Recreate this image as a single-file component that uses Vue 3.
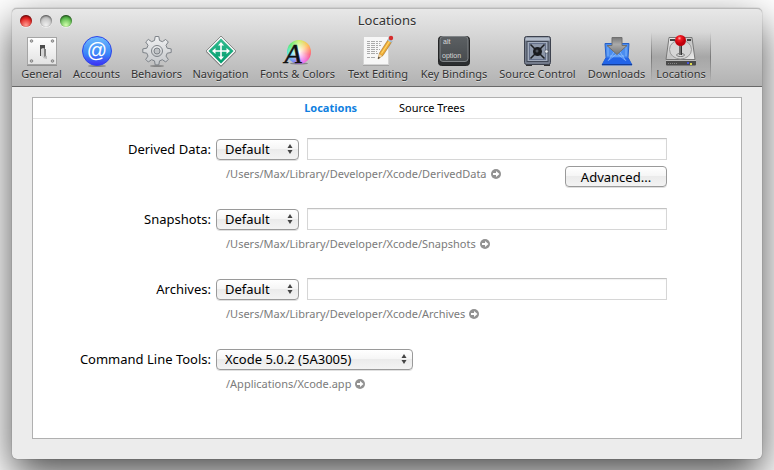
<template>
  <div class="desktop">
    <main class="window">
      <header class="header">
        <div class="title-bar">
          <div class="lights">
            <button class="light close" aria-label="Close"></button>
            <button class="light minimize" aria-label="Minimize" disabled></button>
            <button class="light zoom" aria-label="Zoom"></button>
          </div>
          <h1 class="title">{{ activePane }}</h1>
        </div>
        <nav class="toolbar">
          <button
            v-for="pane in panes"
            :key="pane"
            class="tool"
            :class="{ active: pane === activePane }"
            @click="activePane = pane"
          >
            <svg v-if="pane === 'General'" class="tool-icon" viewBox="0 0 32 32">
              <rect x="1" y="3" width="30" height="28" fill="#777" opacity="0.6" />
              <rect x="1.5" y="2.5" width="29" height="27" fill="url(#plate)" stroke="#a5a5a5" />
              <g fill="#bbb" stroke="#777" stroke-width="0.8">
                <circle cx="5.5" cy="6" r="1.3" />
                <circle cx="26.5" cy="6" r="1.3" />
                <circle cx="5.5" cy="26" r="1.3" />
                <circle cx="26.5" cy="26" r="1.3" />
              </g>
              <path d="M17 20l4 1v3l-4-1z" fill="#000" opacity="0.2" />
              <rect x="14" y="10" width="5" height="11" fill="#4b4b4b" />
              <path d="M15 14l2-1 2 1v7l-1 2-3-2z" fill="#d4d4d4" />
              <path d="M18 14v8l2-1v-7z" fill="#808080" />
            </svg>

            <svg v-else-if="pane === 'Accounts'" class="tool-icon" viewBox="0 0 32 32">
              <ellipse cx="16" cy="31" rx="9" ry="1" opacity="0.3" />
              <circle cx="16" cy="16" r="14.5" fill="url(#at)" stroke="#2f45e8" />
              <text x="16" y="22" class="at-sign">@</text>
            </svg>

            <svg v-else-if="pane === 'Behaviors'" class="tool-icon" viewBox="0 0 32 32">
              <ellipse cx="16" cy="31" rx="7" ry="1" opacity="0.3" />
              <g fill="url(#steel)" stroke="#7d8288" stroke-linejoin="round">
                <path
                  d="M13.5 5.5L14.200 1.500h3.600l.7 4 2.900 1.200 3.300-2.300 2.600 2.600-2.300 3.300 1.200 2.900 4 .7v3.600l-4 .7-1.200 2.900 2.300 3.300-2.600 2.600-3.300-2.300-2.900 1.200-.7 4h-3.600l-.7-4-2.900-1.200-3.300 2.300-2.600-2.600 2.300-3.300-1.200-2.900-4-.7v-3.600l4-.7 1.200-2.900-2.300-3.300 2.600-2.600 3.300 2.300z"
                />
                <circle cx="16" cy="16" r="5.5" />
                <circle cx="16" cy="16" r="3" fill="#bfc2c5" />
              </g>
            </svg>

            <svg v-else-if="pane === 'Navigation'" class="tool-icon" viewBox="0 0 32 32">
              <path d="M16 2L31 17 16 32 1 17z" fill="#555" opacity="0.5" />
              <path
                d="M16 1L31 16 16 31 1 16z"
                fill="#f4f4f4"
                stroke="#8b8b8b"
                stroke-linejoin="round"
              />
              <path d="M16 3.500L28.500 16 16 28.500 3.500 16z" fill="url(#green)" />
              <path d="M16 9v14M9 16h14" stroke="#fff" stroke-width="1.600" />
              <path
                d="M16 7l3 3.500h-6zM16 25l3-3.500h-6zM7 16l3.500-3v6zM25 16l-3.500-3v6z"
                fill="#fff"
              />
            </svg>

            <svg v-else-if="pane === 'Fonts & Colors'" class="tool-icon" viewBox="0 0 32 32">
              <ellipse cx="17" cy="28.500" rx="9" ry="1" opacity="0.300" />
              <foreignObject x="5" y="5" width="24" height="24">
                <div class="color-wheel"></div>
              </foreignObject>
              <text x="11" y="28" class="letter-a">A</text>
            </svg>

            <svg v-else-if="pane === 'Text Editing'" class="tool-icon" viewBox="0 0 32 32">
              <rect x="1" y="2" width="26" height="29" fill="#888" opacity="0.500" />
              <rect x="1.500" y="1.500" width="25" height="28" fill="#f7f7f7" stroke="#d4d4d4" />
              <path
                d="M5 6.500h15M5 8.500h13M5 10.500h14M5 12.500h12M5 14.500h13M5 16.500h10M5 18.500h11M5 22.500h8"
                stroke="#aaa"
                stroke-dasharray="3 1 4 1 2 1"
              />
              <path d="M16 24l1.500-6L26.500 4l3.500 2.500-9 14z" fill="#edaa35" stroke="#8d6224" stroke-width="0.500" />
              <path d="M19.500 18.500L28 5.500" stroke="#ffd76c" stroke-width="1.200" />
              <path d="M16 24l1.300-5 3 2z" fill="#efd1a0" />
              <path d="M16 24l.5-2.200 1.500 1z" fill="#222" />
              <path d="M26 4.500l4 2.500" stroke="#9fc0dc" stroke-width="2" />
              <circle cx="29" cy="3" r="2.200" fill="#d52c2c" />
            </svg>

            <svg v-else-if="pane === 'Key Bindings'" class="tool-icon" viewBox="0 0 32 32">
              <rect x="0.500" y="1.500" width="31" height="29" rx="3" fill="#2c2e30" stroke="#242526" />
              <rect x="2" y="1.500" width="28" height="25" rx="3" fill="url(#key)" stroke="#808487" />
              <text x="5" y="9" class="key-text">alt</text>
              <text x="4" y="23" class="key-text">option</text>
            </svg>

            <svg v-else-if="pane === 'Source Control'" class="tool-icon" viewBox="0 0 32 32">
              <rect x="4" y="29" width="6" height="2" fill="#333" />
              <rect x="22" y="29" width="6" height="2" fill="#333" />
              <rect x="2.500" y="1.500" width="26" height="28" rx="2" fill="#747c8c" stroke="#3d424e" />
              <path d="M4 2.500h23l1 3H3z" fill="#b4bdcb" />
              <rect x="5" y="6.500" width="21" height="20" fill="#a1abbc" stroke="#414856" />
              <rect x="7.500" y="8.500" width="16" height="16" fill="#8d97a9" stroke="#65708a" />
              <path d="M8.500 9.500l14 14M22.500 9.500l-14 14" stroke="#1c1e22" stroke-width="1.500" />
              <circle cx="15.500" cy="16.500" r="4.500" fill="#191b1f" />
              <circle cx="15" cy="16" r="1.500" fill="#4e535c" />
              <circle cx="24.500" cy="16.500" r="1.700" fill="#eceff3" stroke="#474d58" stroke-width="0.600" />
            </svg>

            <svg v-else-if="pane === 'Downloads'" class="tool-icon" viewBox="0 0 32 32">
              <path d="M4 8.500h24l-1 14 4 7.500H1l4-7.500z" fill="#4a8df0" stroke="#2660c8" />
              <path d="M5 22.500l-4 7.500h30l-4-7.500z" fill="#2264e8" />
              <path
                d="M7 26l8-12M25 26l-8-12M7 12v9M25 12v9M9 21h14M8 12l16 13M24 12L8 25"
                stroke="#96c3ff"
                fill="none"
                opacity="0.700"
              />
              <path d="M1 29.500h30" stroke="#133d9a" />
              <path d="M11 2.500h10v8h5l-10 9-10-9h5z" fill="url(#arrow)" stroke="#707070" />
            </svg>

            <svg v-else class="tool-icon" viewBox="0 0 32 32">
              <path d="M4 2.500h23l3 22H1z" fill="url(#disk)" stroke="#777" />
              <path d="M1 25h30v4.500q0 1-1 1H2q-1 0-1-1z" fill="#4a4a4a" />
              <path d="M1 25.500h30" stroke="#bbb" />
              <path d="M3 28.500h10" stroke="#858585" stroke-dasharray="1 1" />
              <rect x="22" y="27" width="2" height="2" fill="#4753d8" />
              <rect x="25" y="28" width="2" height="2" fill="#ddd94d" />
              <ellipse cx="15.500" cy="14.500" rx="11" ry="9.500" fill="#d6d6d6" stroke="#9a9a9a" />
              <path d="M5 4h5v2H5zM22 4h4v2h-4z" fill="#444" />
              <ellipse cx="15.500" cy="20" rx="4" ry="1.500" fill="#e4e4e4" stroke="#737373" />
              <path d="M15.500 10v10" stroke="#343434" stroke-width="3" />
              <path d="M15 10v10" stroke="#aaa" />
              <circle cx="15.500" cy="5.500" r="5.500" fill="url(#ball)" />
            </svg>
            <span>{{ pane }}</span>
          </button>
        </nav>
      </header>

      <section class="panel">
        <nav class="tabs">
          <button
            v-for="tab in tabs"
            :key="tab"
            class="tab"
            :class="{ selected: tab === activeTab }"
            @click="activeTab = tab"
          >
            {{ tab }}
          </button>
        </nav>

        <form class="form" @submit.prevent>
          <div v-for="field in fields" :key="field.id" class="field">
            <label class="field-label" :for="field.id">{{ field.label }}:</label>
            <div class="controls">
              <div class="popup" :class="{ wide: field.wide }">
                <select :id="field.id">
                  <option>{{ field.value }}</option>
                </select>
                <svg class="popup-arrows" viewBox="0 0 6 12">
                  <path d="M3 1l2.500 4h-5zM3 11l2.500-4h-5z" fill="#444" />
                </svg>
              </div>
              <input
                v-if="!field.wide"
                class="path-input"
                type="text"
                :aria-label="field.label + ' path'"
              />
            </div>
            <div class="details">
              <a class="path" href="#" @click.prevent>
                {{ field.path }}
                <svg class="reveal" viewBox="0 0 10 10">
                  <circle cx="5" cy="5" r="5" fill="#929292" />
                  <path d="M2 4h3V2l3.500 3L5 8V6H2z" fill="#fff" />
                </svg>
              </a>
              <button v-if="field.advanced" class="advanced" type="button">Advanced...</button>
            </div>
          </div>
        </form>
      </section>
    </main>

    <!-- gradients shared by the toolbar icons -->
    <svg class="defs" aria-hidden="true">
      <defs>
        <linearGradient id="plate" x2="0" y2="1">
          <stop offset="0" stop-color="#fff" />
          <stop offset="1" stop-color="#e2e2e2" />
        </linearGradient>
        <linearGradient id="at" x2="0" y2="1">
          <stop offset="0" stop-color="#70bcfc" />
          <stop offset="0.600" stop-color="#3a86f8" />
          <stop offset="1" stop-color="#3f2cf5" />
        </linearGradient>
        <linearGradient id="steel" x2="0" y2="1">
          <stop offset="0" stop-color="#f0f1f2" />
          <stop offset="1" stop-color="#c3c6c9" />
        </linearGradient>
        <linearGradient id="green" x2="0" y2="1">
          <stop offset="0" stop-color="#35bd91" />
          <stop offset="1" stop-color="#009b6c" />
        </linearGradient>
        <linearGradient id="key" x2="0" y2="1">
          <stop offset="0" stop-color="#5c6063" />
          <stop offset="1" stop-color="#474b4e" />
        </linearGradient>
        <linearGradient id="arrow" x2="0" y2="1">
          <stop offset="0" stop-color="#777" />
          <stop offset="0.400" stop-color="#aaa" />
          <stop offset="1" stop-color="#777" />
        </linearGradient>
        <linearGradient id="disk" x2="1" y2="1">
          <stop offset="0" stop-color="#f4f4f4" />
          <stop offset="0.500" stop-color="#c4c4c4" />
          <stop offset="1" stop-color="#eee" />
        </linearGradient>
        <radialGradient id="ball" cx="0.400" cy="0.300">
          <stop offset="0" stop-color="#ffb0b0" />
          <stop offset="0.350" stop-color="#f31a22" />
          <stop offset="1" stop-color="#c0000c" />
        </radialGradient>
      </defs>
    </svg>
  </div>
</template>

<script setup>
import { ref } from "vue";

const panes = [
  "General",
  "Accounts",
  "Behaviors",
  "Navigation",
  "Fonts & Colors",
  "Text Editing",
  "Key Bindings",
  "Source Control",
  "Downloads",
  "Locations",
];
const activePane = ref("Locations");

const tabs = ["Locations", "Source Trees"];
const activeTab = ref("Locations");

const fields = [
  {
    id: "derived-data",
    label: "Derived Data",
    value: "Default",
    path: "/Users/Max/Library/Developer/Xcode/DerivedData",
    advanced: true,
  },
  {
    id: "snapshots",
    label: "Snapshots",
    value: "Default",
    path: "/Users/Max/Library/Developer/Xcode/Snapshots",
  },
  {
    id: "archives",
    label: "Archives",
    value: "Default",
    path: "/Users/Max/Library/Developer/Xcode/Archives",
  },
  {
    id: "command-line-tools",
    label: "Command Line Tools",
    value: "Xcode 5.0.2 (5A3005)",
    path: "/Applications/Xcode.app",
    wide: true,
  },
];
</script>

<style>
body {
  margin: 0;
  background: #fff;
}
</style>

<style scoped>
.desktop {
  box-sizing: border-box;
  min-height: 100vh;
  padding: 8px 12px 11px;
  display: flex;
  overflow: hidden;
  font-family: "Lucida Grande", "Noto Sans", "Open Sans", sans-serif;
  font-size: 13px;
  color: #000;
}
button,
select,
input {
  font: inherit;
  color: inherit;
}
button {
  padding: 0;
  border: 0;
  background: none;
}
.window {
  flex: 1;
  min-width: 0;
  display: flex;
  flex-direction: column;
  background: #ececec;
  border-radius: 5px;
  box-shadow:
    0 0 1px rgba(0, 0, 0, 0.6),
    0 16px 40px rgba(0, 0, 0, 0.7);
}
.header {
  border-top: 1px solid #b9b9b9;
  border-bottom: 1px solid #686868;
  border-radius: 5px 5px 0 0;
  background: linear-gradient(#e8e8e8, #b2b2b2);
}
.title-bar {
  height: 23px;
  padding: 0 8px;
  display: grid;
  grid-template-columns: 1fr auto 1fr;
  align-items: center;
}
.lights {
  display: flex;
  gap: 8px;
}
.light {
  width: 12px;
  height: 12px;
  border-radius: 50%;
  box-shadow:
    inset 0 1px 2px rgba(0, 0, 0, 0.6),
    0 1px 0 rgba(255, 255, 255, 0.5);
}
.close {
  background: radial-gradient(circle at 50% 85%, #ff9d92, #e2201e 60%, #b90c10);
}
.minimize {
  background: radial-gradient(circle at 50% 85%, #f0f0f0, #c4c4c4 60%, #a8a8a8);
}
.zoom {
  background: radial-gradient(circle at 50% 85%, #d2ffad, #5cbb4d 60%, #31862c);
}
.title {
  margin: 0;
  font-size: 13px;
  font-weight: 400;
  line-height: 23px;
  color: #333;
  text-shadow: 0 1px 0 rgba(255, 255, 255, 0.5);
}
.toolbar {
  padding: 0 4px 4px;
  display: grid;
  grid-template-columns: 51px 59px 61px 67px 87px 74px 78px 89px 69px 60px;
}
.tool {
  height: 50px;
  padding-top: 3px;
  display: flex;
  flex-direction: column;
  align-items: center;
  font-size: 11px;
  line-height: 14px;
  color: #333;
  white-space: nowrap;
  text-shadow: 0 1px 0 rgba(255, 255, 255, 0.5);
}
.tool.active {
  background:
    linear-gradient(rgba(90, 90, 90, 0), rgba(90, 90, 90, 0.6) 50%, rgba(90, 90, 90, 0)) left / 1px 100% no-repeat,
    linear-gradient(rgba(90, 90, 90, 0), rgba(90, 90, 90, 0.6) 50%, rgba(90, 90, 90, 0)) right / 1px 100% no-repeat,
    linear-gradient(rgba(0, 0, 0, 0), rgba(0, 0, 0, 0.16) 50%, rgba(0, 0, 0, 0));
}
.tool-icon {
  width: 32px;
  height: 32px;
  flex-shrink: 0;
  overflow: visible;
  text-shadow: none;
}
.at-sign {
  font-family: "Liberation Sans", sans-serif;
  font-size: 20px;
  text-anchor: middle;
  fill: #fff;
}
.letter-a {
  font-family: "Liberation Serif", serif;
  font-size: 28px;
  font-style: italic;
  text-anchor: middle;
  fill: #111;
  stroke: #111;
  stroke-width: 0.5px;
}
.key-text {
  font-family: "Liberation Sans", sans-serif;
  font-size: 7px;
  fill: #d8d8d8;
}
.color-wheel {
  width: 24px;
  height: 24px;
  border-radius: 50%;
  background:
    radial-gradient(circle, #fff, rgba(255, 255, 255, 0.1) 70%),
    conic-gradient(#c8f05a, #ffb43c, #ff4a6c, #e957ee, #6666f0, #3ce0e8, #42e95f, #c8f05a);
}
.panel {
  flex: 1;
  margin: 10px 20px 20px;
  border: 1px solid #b0b0b0;
  background: #fff;
}
.tabs {
  height: 20px;
  padding-right: 5px;
  display: flex;
  justify-content: center;
  gap: 42px;
  border-bottom: 1px solid #e2e2e2;
}
.tab {
  font-size: 11px;
  line-height: 20px;
}
.tab.selected {
  font-weight: 700;
  color: #0f7fe0;
}
.form {
  padding: 19px 74px 0 0;
}
.field {
  display: grid;
  grid-template-columns: 178px 1fr;
  column-gap: 5px;
  row-gap: 6px;
  padding-bottom: 20px;
}
.field-label {
  line-height: 22px;
  text-align: right;
  white-space: nowrap;
}
.controls {
  display: flex;
  align-items: center;
  gap: 8px;
}
.popup {
  position: relative;
  width: 83px;
  height: 21px;
}
.popup.wide {
  width: 197px;
}
.popup select {
  width: 100%;
  height: 100%;
  padding: 0 16px 0 8px;
  display: block;
  appearance: none;
  border: 1px solid #9a9a9a;
  border-radius: 4px;
  background: linear-gradient(#fff, #f5f5f5 50%, #ebebeb 50%, #f3f3f3);
  box-shadow: 0 1px 0 rgba(0, 0, 0, 0.12);
}
.popup-arrows {
  position: absolute;
  top: 4px;
  right: 6px;
  width: 6px;
  height: 12px;
  pointer-events: none;
}
.path-input {
  flex: 1;
  min-width: 0;
  height: 22px;
  box-sizing: border-box;
  padding: 0 4px;
  border: 1px solid #d6d6d6;
  border-top-color: #c2c2c2;
  background: #fff;
  box-shadow: inset 0 1px 1px rgba(0, 0, 0, 0.06);
}
.details {
  grid-column: 2;
  height: 22px;
  padding-left: 10px;
  display: flex;
  justify-content: space-between;
  align-items: flex-start;
}
.path {
  display: flex;
  align-items: center;
  gap: 4px;
  font-size: 11px;
  line-height: 16px;
  color: #7b7b7b;
  text-decoration: none;
}
.reveal {
  width: 10px;
  height: 10px;
}
.advanced {
  width: 102px;
  height: 21px;
  border: 1px solid #9a9a9a;
  border-radius: 4px;
  line-height: 18px;
  background: linear-gradient(#fff, #f5f5f5 50%, #ebebeb 50%, #f3f3f3);
  box-shadow: 0 1px 0 rgba(0, 0, 0, 0.12);
}
.defs {
  position: absolute;
  width: 0;
  height: 0;
}
</style>
